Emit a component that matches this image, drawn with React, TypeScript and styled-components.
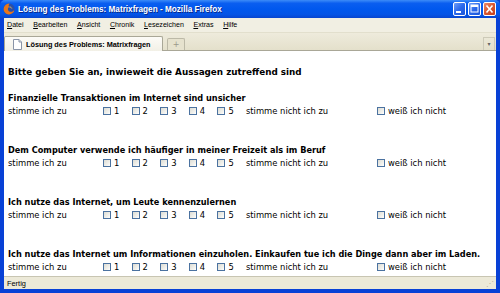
import React from 'react'
import styled, { createGlobalStyle } from 'styled-components'

const GlobalStyle = createGlobalStyle`
  html, body {
    margin: 0;
    padding: 0;
    overflow: hidden;
    background: #fff;
  }
`;

const menuItems = ['Datei', 'Bearbeiten', 'Ansicht', 'Chronik', 'Lesezeichen', 'Extras', 'Hilfe'];

const questions = [
  'Finanzielle Transaktionen im Internet sind unsicher',
  'Dem Computer verwende ich häufiger in meiner Freizeit als im Beruf',
  'Ich nutze das Internet, um Leute kennenzulernen',
  'Ich nutze das Internet um Informationen einzuholen. Einkaufen tue ich die Dinge dann aber im Laden.',
];

const App: React.FC = () => {
  return (
    <>
      <GlobalStyle />
      <Window>
        <TitleBar>
          <FoxLogo viewBox="0 0 12 12">
            <circle cx="6" cy="6" r="5.6" fill="#2a4fa8" />
            <path d="M6 0.6 A5.4 5.4 0 1 0 11.4 6.4 C10.6 8.6 8 9.4 6.3 8.4 C4.4 7.3 4.6 4.6 6.4 4 C5.2 3.1 5.6 1.6 6.6 0.8 Z" fill="#e8761b" />
            <path d="M6.4 4 C7.6 3.8 8.6 4.6 8.8 5.6" stroke="#f7c34a" strokeWidth="0.8" fill="none" />
          </FoxLogo>
          <TitleText>Lösung des Problems: Matrixfragen - Mozilla Firefox</TitleText>
          <Controls>
            <CtrlButton>
              <svg width="13" height="14" viewBox="0 0 13 14"><rect x="3" y="9" width="5" height="2" fill="#fff" /></svg>
            </CtrlButton>
            <CtrlButton>
              <svg width="13" height="14" viewBox="0 0 13 14"><rect x="3" y="3" width="7" height="7" fill="none" stroke="#fff" strokeWidth="1" /><rect x="3" y="3" width="7" height="2" fill="#fff" /></svg>
            </CtrlButton>
            <CtrlButton $close>
              <svg width="13" height="14" viewBox="0 0 13 14"><path d="M3.5 3.5 L9.5 10.5 M9.5 3.5 L3.5 10.5" stroke="#fff" strokeWidth="1.6" /></svg>
            </CtrlButton>
          </Controls>
        </TitleBar>
        <Frame>
          <MenuBar>
            {menuItems.map((m) => (
              <MenuItem key={m}><u>{m[0]}</u>{m.slice(1)}</MenuItem>
            ))}
          </MenuBar>
          <TabBar>
            <Tab>
              <svg width="9" height="11" viewBox="0 0 9 11">
                <path d="M0.5 0.5 H6 L8.5 3 V10.5 H0.5 Z" fill="#fff" stroke="#8a95a8" />
                <path d="M6 0.5 V3 H8.5" fill="#dfe4ec" stroke="#8a95a8" />
              </svg>
              <TabLabel>Lösung des Problems: Matrixfragen</TabLabel>
            </Tab>
            <NewTab>+</NewTab>
            <Spacer />
            <TabMenu>▾</TabMenu>
          </TabBar>
          <Content>
            <Heading>Bitte geben Sie an, inwieweit die Aussagen zutreffend sind</Heading>
            {questions.map((q) => (
              <Block key={q}>
                <Question>{q}</Question>
                <Row>
                  <span>stimme ich zu</span>
                  {[1, 2, 3, 4, 5].map((n) => (
                    <Option key={n}>
                      <Box />
                      {n}
                    </Option>
                  ))}
                  <span>stimme nicht ich zu</span>
                  <Option>
                    <Box />
                    weiß ich nicht
                  </Option>
                </Row>
              </Block>
            ))}
          </Content>
          <StatusBar>
            <span>Fertig</span>
            <Grip>⋰</Grip>
          </StatusBar>
        </Frame>
      </Window>
    </>
  )
}

export default App

const Window = styled.div`
  width: 500px;
  height: 293px;
  display: flex;
  flex-direction: column;
  background: #0841d6;
  font-family: "DejaVu Sans", Verdana, sans-serif;
`;

const TitleBar = styled.div`
  height: 18px;
  display: flex;
  align-items: center;
  padding: 0 4px 0 3px;
  gap: 3px;
  background: linear-gradient(to bottom, #3c8cf8 0%, #0a5ef0 18%, #0058ee 50%, #0454e6 80%, #0845cf 100%);
  border-radius: 5px 5px 0 0;
`;

const FoxLogo = styled.svg`
  width: 12px;
  height: 12px;
  flex: none;
`;

const TitleText = styled.div`
  flex: 1;
  color: #fff;
  font-family: "Liberation Sans", Arial, sans-serif;
  font-weight: bold;
  font-size: 8.2px;
  text-shadow: 1px 1px 0 #0a2a8a;
  white-space: nowrap;
`;

const Controls = styled.div`
  display: flex;
  gap: 2px;
`;

const CtrlButton = styled.div<{ $close?: boolean }>`
  width: 13px;
  height: 14px;
  box-sizing: border-box;
  border: 1px solid #fff;
  border-radius: 2px;
  display: flex;
  overflow: hidden;
  background: ${({ $close }) =>
    $close
      ? 'linear-gradient(135deg, #e98a6c 0%, #d8572f 50%, #c4401c 100%)'
      : 'linear-gradient(135deg, #6f9ef8 0%, #2a68ec 50%, #1c55d8 100%)'};
  svg {
    margin: -1px;
  }
`;

const Frame = styled.div`
  flex: 1;
  display: flex;
  flex-direction: column;
  margin: 0 4px 4px 4px;
  background: #ece9d8;
  min-height: 0;
`;

const MenuBar = styled.div`
  height: 14px;
  display: flex;
  align-items: center;
  gap: 9.6px;
  padding-left: 3px;
  background: #f1efe3;
  font-family: "Liberation Sans", Arial, sans-serif;
  font-size: 7.1px;
  color: #000;
  border-bottom: 1px solid #e2dfcd;
`;

const MenuItem = styled.span`
  u {
    text-decoration: underline;
  }
`;

const TabBar = styled.div`
  height: 17px;
  display: flex;
  align-items: flex-end;
  gap: 4px;
  padding: 0 1px 0 0;
  background: linear-gradient(to bottom, #eeebdc 0%, #e4e0cb 100%);
  border-bottom: 1px solid #a9a797;
`;

const Tab = styled.div`
  width: 159px;
  height: 15px;
  box-sizing: border-box;
  display: flex;
  align-items: center;
  gap: 4px;
  padding-left: 8px;
  background: linear-gradient(to bottom, #fcfbf7, #f2f0e6);
  border: 1px solid #a9a797;
  border-bottom: none;
  border-radius: 2px 2px 0 0;
  margin-bottom: -1px;
`;

const TabLabel = styled.span`
  font-family: "Liberation Sans", Arial, sans-serif;
  font-weight: bold;
  font-size: 7.3px;
  color: #000;
  white-space: nowrap;
`;

const NewTab = styled.div`
  width: 18px;
  height: 12px;
  box-sizing: border-box;
  border: 1px solid #bcb9a7;
  border-bottom: none;
  border-radius: 2px 2px 0 0;
  background: #e6e2ce;
  color: #9a978a;
  font-size: 8px;
  line-height: 11px;
  text-align: center;
`;

const Spacer = styled.div`
  flex: 1;
`;

const TabMenu = styled.div`
  width: 12px;
  height: 13px;
  box-sizing: border-box;
  border: 1px solid #cdcab8;
  border-bottom: none;
  color: #666;
  font-size: 6px;
  line-height: 12px;
  text-align: center;
`;

const Content = styled.div`
  flex: 1;
  background: #fff;
  padding: 16px 0 0 4px;
  color: #000;
  font-size: 8.4px;
  line-height: 10px;
  overflow: hidden;
`;

const Heading = styled.div`
  font-weight: bold;
  font-size: 8.8px;
  margin-bottom: 16px;
  white-space: nowrap;
`;

const Block = styled.div`
  height: 52px;
`;

const Question = styled.div`
  font-weight: bold;
  font-size: 8.2px;
  white-space: nowrap;
  margin-bottom: 3px;
`;

const Row = styled.div`
  display: grid;
  grid-template-columns: 95px repeat(5, 28.6px) 131px auto;
  align-items: center;
  white-space: nowrap;
`;

const Option = styled.span`
  display: flex;
  align-items: center;
  gap: 3px;
`;

const Box = styled.span`
  width: 8px;
  height: 8px;
  box-sizing: border-box;
  border: 1px solid #4b72a0;
  background: linear-gradient(135deg, #dcdcd4 0%, #f3f3ef 70%, #fff 100%);
  flex: none;
`;

const StatusBar = styled.div`
  height: 12px;
  display: flex;
  align-items: center;
  justify-content: space-between;
  padding: 0 2px 0 3px;
  border-top: 1px solid #c8c5b2;
  background: #ece9d8;
  font-family: "Liberation Sans", Arial, sans-serif;
  font-size: 7.4px;
`;

const Grip = styled.span`
  color: #b5b2a0;
  font-size: 8px;
`;
